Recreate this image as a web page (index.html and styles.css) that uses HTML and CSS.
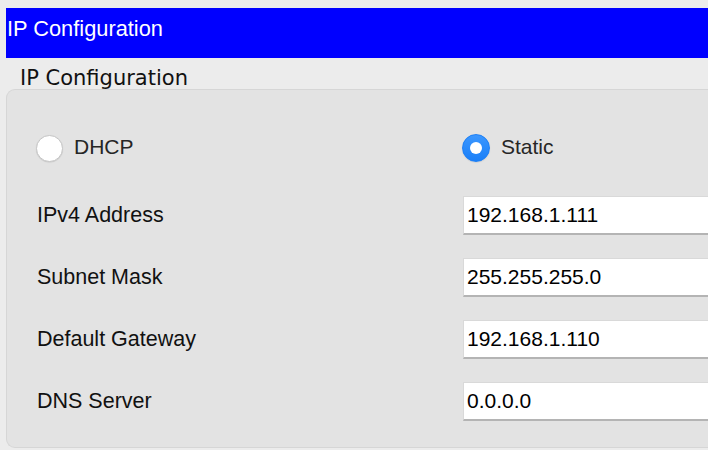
FILE: index.html
```html
<!DOCTYPE html>
<html>
<head>
<meta charset="utf-8">
<link rel="stylesheet" href="styles.css">
</head>
<body>
<div class="titlebar">IP Configuration</div>
<div class="legend">IP Configuration</div>
<div class="panel">
  <div class="radio-row">
    <label class="radio"><span class="dot"></span><span class="radio-text">DHCP</span></label>
    <label class="radio"><span class="dot checked"></span><span class="radio-text">Static</span></label>
  </div>
  <div class="field">
    <span class="label">IPv4 Address</span>
    <div class="input">192.168.1.111</div>
  </div>
  <div class="field">
    <span class="label">Subnet Mask</span>
    <div class="input">255.255.255.0</div>
  </div>
  <div class="field">
    <span class="label">Default Gateway</span>
    <div class="input">192.168.1.110</div>
  </div>
  <div class="field">
    <span class="label">DNS Server</span>
    <div class="input">0.0.0.0</div>
  </div>
</div>
</body>
</html>
```
FILE: styles.css
```css
html {
  overflow: hidden;
  background: #ececec;
}
body {
  margin: 8px 0 0 6px;
  width: 702px;
  font-family: "Liberation Sans", Arial, sans-serif;
  color: #000;
}
.titlebar {
  background: #0000ff;
  color: #fff;
  font-size: 21.8px;
  line-height: 25px;
  height: 50px;
  box-sizing: border-box;
  padding: 8px 0 0 1px;
}
.legend {
  display: inline-block;
  margin: 11px 0 0 14px;
  padding-right: 2px;
  font-family: "DejaVu Sans", sans-serif;
  font-size: 21px;
  line-height: 19px;
  color: #111;
  background: #ececec;
}
.panel {
  background: #e3e3e3;
  border: 1px solid #d6d6d6;
  border-right: none;
  border-radius: 9px 0 0 9px;
  padding: 44px 0 28px 29px;
  display: flex;
  flex-direction: column;
  gap: 23px;
  height: 359px;
  box-sizing: border-box;
}
.radio-row {
  display: grid;
  grid-template-columns: 426px 1fr;
  height: 28px;
  margin-bottom: 11px;
}
.radio {
  display: flex;
  align-items: center;
  gap: 11px;
}
.dot {
  width: 27px;
  height: 27px;
  border-radius: 50%;
  background: #fff;
  border: 1px solid #c6c6c6;
  box-sizing: border-box;
  box-shadow: 0 0.5px 1px rgba(0,0,0,0.12);
  display: flex;
  align-items: center;
  justify-content: center;
}
.dot.checked {
  width: 28px;
  height: 28px;
  background: linear-gradient(#3b97ff, #1a7ff8);
  border-color: #1d7ff5;
}
.dot.checked::after {
  content: "";
  width: 12px;
  height: 12px;
  border-radius: 50%;
  background: #fff;
}
.radio-text {
  font-size: 21px;
  line-height: 24px;
  padding-bottom: 3px;
  color: #262626;
}
.field {
  display: grid;
  grid-template-columns: 427px 1fr;
  align-items: center;
  height: 39px;
}
.label {
  font-size: 21.5px;
  line-height: 24px;
  padding-bottom: 2px;
  padding-left: 1px;
  color: #111;
}
.input {
  background: #fff;
  height: 39px;
  box-sizing: border-box;
  border: 1px solid #d9d9d9;
  border-bottom: 2px solid #b4b4b4;
  border-right: none;
  font-size: 21px;
  line-height: 35px;
  padding-left: 3px;
  color: #000;
}
```
